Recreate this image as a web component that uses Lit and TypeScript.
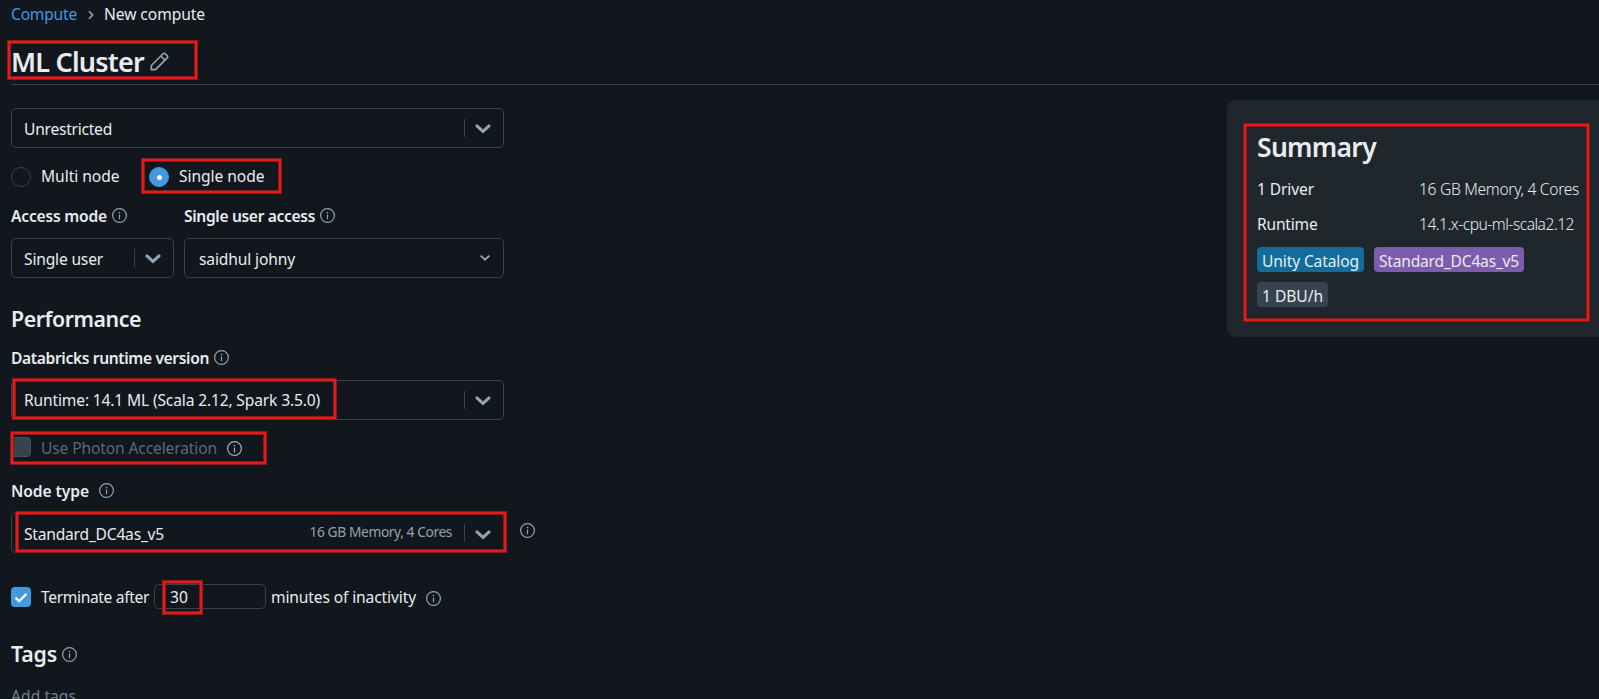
import { LitElement, html, css } from "lit";
import { customElement, property } from "lit/decorators.js";
import { styleMap } from "lit/directives/style-map.js";

/** A run of text tracked so that it fills a given measure. */
@customElement("fit-text")
class FitText extends LitElement {
  @property({ type: Number }) w = 0;
  static styles = css`
    :host { display: inline-block; white-space: pre; flex: none; }
  `;
  firstUpdated() {
    const natural = this.getBoundingClientRect().width;
    const n = (this.textContent || "").length;
    if (this.w && n > 1) {
      this.style.letterSpacing = `${((this.w - natural) / n).toFixed(3)}px`;
    }
  }
  render() {
    return html`<slot></slot>`;
  }
}

const info = () => html`<svg class="info" viewBox="0 0 16 16" width="16" height="16">
  <circle cx="7.5" cy="7.5" r="6.9" fill="none" stroke="currentColor" stroke-width="1.2" />
  <path d="M7.5 6.5V11.2" stroke="currentColor" stroke-width="1.2" />
  <circle cx="7.5" cy="4.6" r=".8" fill="currentColor" />
</svg>`;

const chevron = () => html`<span class="arrow"><svg viewBox="0 0 16 10" width="16" height="10">
  <path d="M1.9 1.9L8 7.4L14.1 1.9" fill="none" stroke="currentColor" stroke-width="3" stroke-linecap="round" />
</svg></span>`;

/** Highlight frames: left, top, width, height. */
const frames = [
  [7, 40, 191, 40],
  [141, 158, 141, 36],
  [12, 378, 325, 42],
  [10, 431, 257, 34],
  [15, 511, 492, 42],
  [162, 580, 41, 35],
  [1243, 123, 347, 199],
];

@customElement("app-root")
class AppRoot extends LitElement {
  static styles = css`
    :host {
      display: block; position: relative; width: 100%; height: 699px; overflow: hidden;
      background: #11171c; color: #e8ecf0;
      font: 15.6px/24px "Noto Sans", "Open Sans", sans-serif;
    }
    * { box-sizing: border-box; }
    svg { display: block; flex: none; }
    .crumbs { display: flex; align-items: center; height: 29px; padding-left: 11px; }
    .crumbs fit-text { margin-top: -1px; }
    .crumbs .link { color: #4299e0; }
    .crumbs svg { margin: 1px 9px 0 10px; color: #92a4b3; }
    .title { display: flex; align-items: center; height: 56px; margin-left: 11px;
      padding-top: 14px; border-bottom: 1px solid #37444f; }
    .title fit-text { font-size: 27px; font-weight: 600; line-height: 36px; height: 40px; }
    .title svg { margin: -4px 0 0 6px; color: #92a4b3; }
    .body { display: flex; justify-content: space-between; align-items: flex-start; }
    .form { display: flex; flex-direction: column; width: 493px; margin-left: 11px; padding-top: 23px; }
    .select { display: flex; align-items: center; height: 40px; padding: 0 12px 0 12px;
      border: 1px solid #37444f; border-radius: 5px; flex: none; }
    .select fit-text { margin-top: 1px; margin-right: auto; }
    .select .low { margin-top: 2px; }
    .arrow { display: flex; align-items: center; height: 18px; padding-left: 10px; margin-top: -1px;
      border-left: 1px solid #37444f; color: #92a4b3; }
    .arrow svg { margin-top: 2px; }
    .select .note { font-size: 13.8px; color: #92a4b3; margin: -3px 12px 0 0; }
    .row { display: flex; align-items: center; flex: none; }
    .info { color: #92a4b3; }
    .radios { height: 20px; margin-top: 19px; }
    .radio { width: 20px; height: 20px; border: 1px solid #37444f; border-radius: 50%; margin-right: 10px; }
    .radio.on { background: #4299e0; border-color: #4299e0; margin-left: 29.5px; display: grid; place-items: center; }
    .radio.on::after { content: ""; width: 5px; height: 5px; border-radius: 50%; background: #fff; }
    .radios fit-text { margin-top: -2px; }
    .label { font-weight: 600; height: 24px; }
    .label fit-text { margin-top: 2px; }
    .pair { display: grid; grid-template-columns: 163px 320px; column-gap: 10px; margin-top: 16px; flex: none; }
    .pair .label .info, .runtime .info { margin: 1px 0 0 5px; }
    .pair .select { margin-top: 11px; }
    .pair .user { padding: 0 12px 0 14px; }
    .user svg { color: #92a4b3; margin-top: 0; }
    h2 { margin: 0; font-size: 21.3px; line-height: 30px; height: 30px; font-weight: 600; }
    .perf { margin-top: 26px; }
    .runtime { margin-top: 11px; }
    .select.rt { margin-top: 11px; }
    .select.rt fit-text { margin-top: 0; }
    .photon { height: 20px; margin-top: 17px; color: #5a6a77; }
    .box { width: 20px; height: 20px; border-radius: 4px; margin-right: 10px; display: grid; place-items: center; }
    .box.off { background: #37444f; border: 1px solid #44525e; }
    .box.on { background: #4299e0; }
    .photon .info { margin: 3px 0 0 10px; color: #a5b3bf; }
    .photon fit-text { margin-top: 2px; }
    .node { margin-top: 22px; }
    .node fit-text { margin-top: 0; }
    .node .info { margin: -1px 0 0 10px; }
    .noderow { margin-top: 10px; width: 526px; }
    .noderow .select { width: 493px; }
    .noderow .info { margin: -4px 0 0 16px; }
    .noderow .arrow { margin-top: 0; }
    .noderow .arrow svg { margin-top: 3px; }
    .term { height: 26px; margin-top: 31px; }
    .term .box { margin-top: 0; }
    .term fit-text { margin-top: 0; }
    .input { width: 112px; height: 25px; border: 1px solid #37444f; border-radius: 5px; margin: -1px 5px 0 5px;
      padding-left: 15px; display: flex; align-items: center; }
    .term .info { margin: 4px 0 0 10px; }
    .tags { margin-top: 29px; }
    .tags .info { margin: 1px 0 0 5px; }
    .add { color: #71828f; margin-top: 15px; }
    .card { width: 372px; height: 237px; margin-top: 15px; background: #1f272d; border-radius: 9px 0 0 9px;
      padding: 26px 0 0 30px; }
    .card h1 { margin: 0; height: 44px; font-size: 26.5px; line-height: 42px; font-weight: 600; }
    .facts { display: grid; grid-template-columns: 162px auto; justify-items: start; row-gap: 11px; margin-top: 7px; }
    .facts .thin { font-weight: 300; }
    .chips { display: flex; flex-wrap: wrap; gap: 10px; margin-top: 11px; width: 300px; }
    .chip { height: 25px; padding: 2px 5px 0; border-radius: 4px; }
    .blue { background: #136d9b; }
    .purple { background: #7d5cab; }
    .gray { background: #37444f; }
    .frame { position: absolute; border: 1px solid #8a191c; pointer-events: none;
      box-shadow: inset 0 0 0 2px #e81b1b, inset 0 0 0 3px #8a191c; }
  `;

  render() {
    return html`
      <nav class="crumbs">
        <fit-text class="link" w="66">Compute</fit-text>
        <svg viewBox="0 0 8 10" width="8" height="10"><path d="M2 1.2L5.6 5L2 8.8" fill="none" stroke="currentColor" stroke-width="1.6" /></svg>
        <fit-text w="101">New compute</fit-text>
      </nav>
      <header class="title">
        <fit-text w="133">ML Cluster</fit-text>
        <svg viewBox="0 0 20 20" width="19" height="19" fill="none" stroke="currentColor" stroke-width="1.8" stroke-linejoin="round">
          <path d="M1.4 18.6V14.2L13.5 2.1a2 2 0 0 1 2.8 0l1.6 1.6a2 2 0 0 1 0 2.8L5.8 18.6Z" /><path d="M11.4 4.2L15.8 8.6" />
        </svg>
      </header>
      <main class="body">
        <section class="form">
          <div class="select"><fit-text w="88">Unrestricted</fit-text>${chevron()}</div>
          <div class="row radios">
            <span class="radio"></span><fit-text w="78.5">Multi node</fit-text>
            <span class="radio on"></span><fit-text w="85.5">Single node</fit-text>
          </div>
          <div class="pair">
            <div>
              <div class="row label"><fit-text w="96">Access mode</fit-text>${info()}</div>
              <div class="select"><fit-text class="low" w="79">Single user</fit-text>${chevron()}</div>
            </div>
            <div>
              <div class="row label"><fit-text w="131">Single user access</fit-text>${info()}</div>
              <div class="select user"><fit-text class="low" w="96">saidhul johny</fit-text>
                <svg viewBox="0 0 12 8" width="12" height="8"><path d="M1.6 1.6L6 5.8L10.4 1.6" fill="none" stroke="currentColor" stroke-width="1.9" /></svg>
              </div>
            </div>
          </div>
          <h2 class="perf"><fit-text w="130">Performance</fit-text></h2>
          <div class="row label runtime"><fit-text w="198">Databricks runtime version</fit-text>${info()}</div>
          <div class="select rt"><fit-text w="296">Runtime: 14.1 ML (Scala 2.12, Spark 3.5.0)</fit-text>${chevron()}</div>
          <div class="row photon"><span class="box off"></span><fit-text w="176">Use Photon Acceleration</fit-text>${info()}</div>
          <div class="row label node"><fit-text w="78">Node type</fit-text>${info()}</div>
          <div class="row noderow">
            <div class="select"><fit-text class="low" w="140">Standard_DC4as_v5</fit-text><fit-text class="note" w="142.5">16 GB Memory, 4 Cores</fit-text>${chevron()}</div>
            ${info()}
          </div>
          <div class="row term">
            <span class="box on"><svg viewBox="0 0 14 11" width="14" height="11"><path d="M1.5 5.6L5.2 9.2L12.5 1.8" fill="none" stroke="#fff" stroke-width="2.2" /></svg></span>
            <fit-text w="108">Terminate after</fit-text>
            <div class="input"><fit-text w="18">30</fit-text></div>
            <fit-text w="145">minutes of inactivity</fit-text>${info()}
          </div>
          <h2 class="row tags"><fit-text w="46">Tags</fit-text>${info()}</h2>
          <div class="add"><fit-text w="65">Add tags</fit-text></div>
        </section>
        <aside class="card">
          <h1><fit-text w="119">Summary</fit-text></h1>
          <div class="facts">
            <fit-text w="57">1 Driver</fit-text><fit-text class="thin" w="160">16 GB Memory, 4 Cores</fit-text>
            <fit-text w="60.5">Runtime</fit-text><fit-text class="thin" w="155">14.1.x-cpu-ml-scala2.12</fit-text>
          </div>
          <div class="chips">
            <span class="chip blue"><fit-text w="97">Unity Catalog</fit-text></span>
            <span class="chip purple"><fit-text w="140">Standard_DC4as_v5</fit-text></span>
            <span class="chip gray"><fit-text w="61">1 DBU/h</fit-text></span>
          </div>
        </aside>
      </main>
      ${frames.map(([left, top, width, height]) => html`<div class="frame" style=${styleMap({
        left: `${left}px`, top: `${top}px`, width: `${width}px`, height: `${height}px`,
      })}></div>`)}
    `;
  }
}
